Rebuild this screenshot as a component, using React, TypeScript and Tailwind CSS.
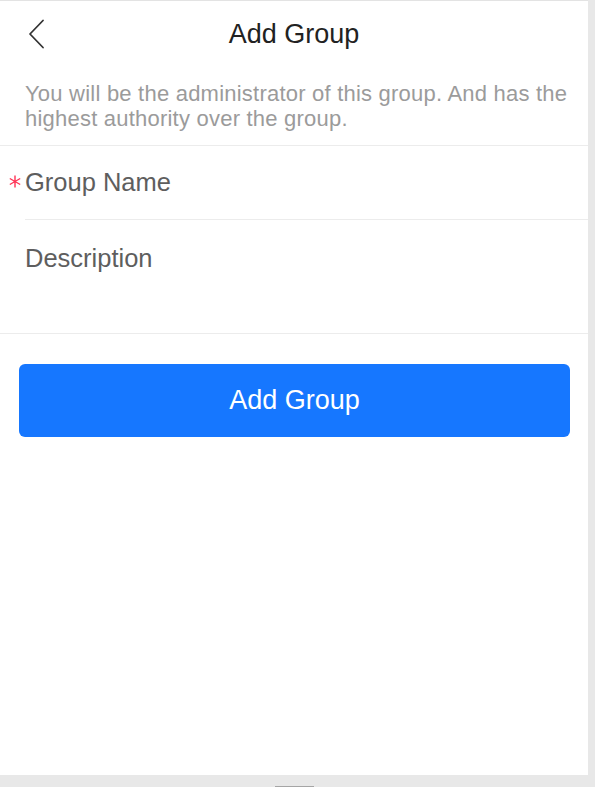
export default function App() {
  return (
    <div
      className="w-[595px] h-[787px] bg-[#e8e8e8] relative overflow-hidden"
      style={{ fontFamily: '"Liberation Sans", Arial, sans-serif' }}
    >
      <div className="w-[588px] h-[775px] bg-white border-t border-[#e3e3e3] flex flex-col">
        {/* Header */}
        <div className="relative h-[66px] flex items-center justify-center">
          <button className="absolute left-[25px] top-[17px] w-[22px] h-[32px] flex items-center justify-center">
            <svg width="18" height="30" viewBox="0 0 18 30" fill="none">
              <path d="M16 1.5 L3 15 L16 28.5" stroke="#333" strokeWidth="1.8" strokeLinecap="round" strokeLinejoin="round" />
            </svg>
          </button>
          <h1 className="text-[27px] leading-none text-[#222]">Add Group</h1>
        </div>

        {/* Tip */}
        <div className="pl-[25px] pr-[12px] pt-[14px] pb-[14px] border-b border-[#ececec]">
          <p className="text-[22px] leading-[25px] text-[#9b9b9b] tracking-[0.22px]">
            You will be the administrator of this group. And has the highest authority over the group.
          </p>
        </div>

        {/* Form */}
        <div className="border-b border-[#ececec]">
          <div className="pl-[25px]">
            <div className="relative h-[74px] flex items-center border-b border-[#ececec]">
              {/* required mark */}
              <svg
                className="absolute -left-[16px] top-[29px]"
                width="12"
                height="13"
                viewBox="0 0 12 13"
                fill="none"
                stroke="#ff3355"
                strokeWidth="1.4"
              >
                <path d="M6 0.5 V12.5 M0.8 3.5 L11.2 9.5 M0.8 9.5 L11.2 3.5" />
              </svg>
              <span className="text-[25.5px] leading-none text-[#5e5e5e]">Group Name</span>
            </div>
            <div className="h-[113px] pt-[26px]">
              <span className="text-[25.5px] leading-none text-[#5e5e5e]">Description</span>
            </div>
          </div>
        </div>

        {/* Submit */}
        <div className="px-[19px] pt-[30px] pr-[18px]">
          <button className="w-full h-[73px] rounded-[6px] bg-[#1677ff] text-white text-[27px] leading-none">
            Add Group
          </button>
        </div>
      </div>
      <div className="absolute left-[275px] top-[786px] w-[39px] h-[1px] bg-[#a5a5a5]" />
    </div>
  );
}
